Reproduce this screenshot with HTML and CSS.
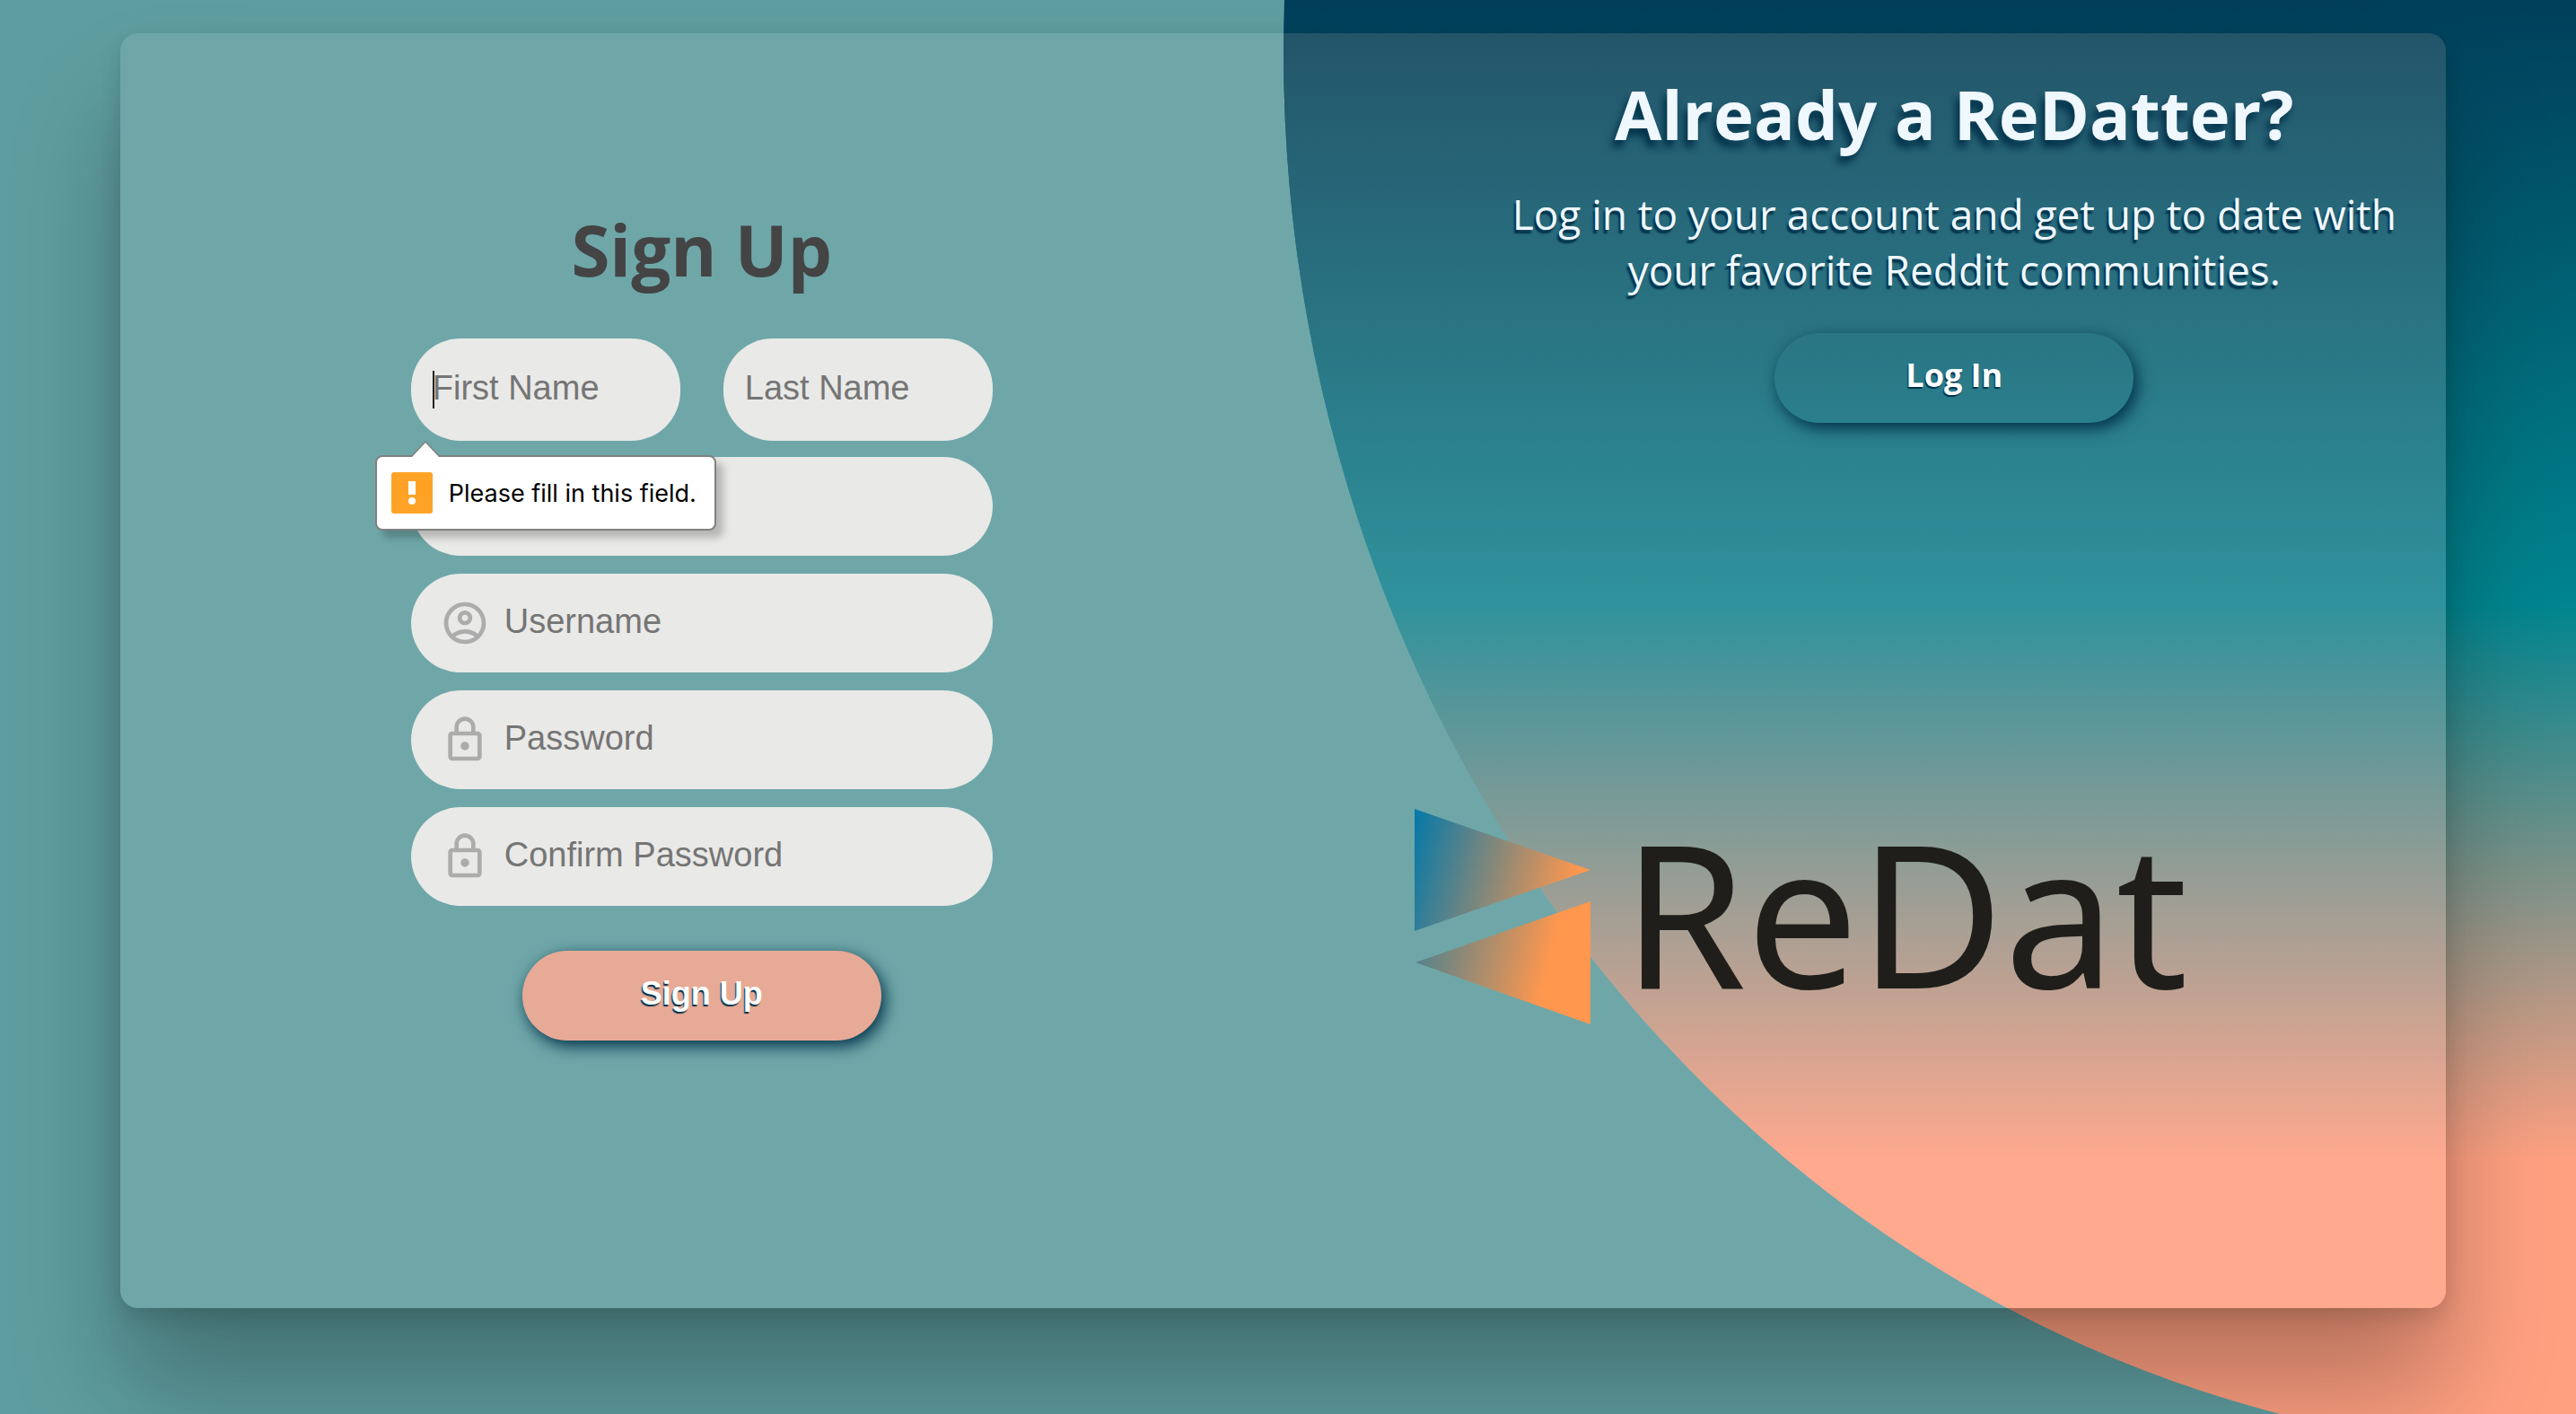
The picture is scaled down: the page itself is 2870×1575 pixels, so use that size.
FILE: index.html
```html
<!DOCTYPE html>
<html lang="en">
<head>
<meta charset="utf-8">
<title>ReDat</title>
<link rel="stylesheet" href="styles.css">
</head>
<body>
<div class="page">
  <main class="card">
    <div class="glass" aria-hidden="true"></div>
    <section class="signup">
      <form class="form" id="signup">
        <h1 class="form-title">Sign Up</h1>
        <div class="names">
          <input class="field short" type="text" placeholder="First Name" aria-label="First Name" required>
          <input class="field short" type="text" placeholder="Last Name" aria-label="Last Name" required>
          <span class="caret" aria-hidden="true"></span>
          <div class="bubble" role="alert">
            <svg class="bubble-tip" viewBox="0 0 34 18" aria-hidden="true"><path d="M1 18 17 1 33 18" fill="#fff" stroke="#808080" stroke-width="1.5"/></svg>
            <svg class="bubble-icon" viewBox="0 0 46 46" aria-hidden="true"><rect width="46" height="46" rx="3" fill="#ffa327"/><path d="M19 10h8v15h-8z" fill="#fff"/><circle cx="23" cy="32" r="4" fill="#fff"/></svg>
            <span>Please fill in this field.</span>
          </div>
        </div>
        <input class="field" type="email" aria-label="Email">
        <label class="field with-icon">
          <svg class="icon" viewBox="0 0 24 24" aria-hidden="true"><path d="M12 2C6.480 2 2 6.480 2 12s4.480 10 10 10 10-4.480 10-10S17.520 2 12 2zM7.350 18.500C8.660 17.560 10.260 17 12 17s3.340.56 4.650 1.500C15.340 19.440 13.740 20 12 20s-3.340-.56-4.650-1.500zm10.790-1.380C16.450 15.800 14.320 15 12 15s-4.450.8-6.140 2.120C4.700 15.730 4 13.950 4 12c0-4.420 3.580-8 8-8s8 3.580 8 8c0 1.950-.7 3.730-1.860 5.120zM12 6c-1.930 0-3.500 1.570-3.500 3.500S10.070 13 12 13s3.500-1.570 3.500-3.500S13.930 6 12 6zm0 5c-.83 0-1.500-.67-1.500-1.500S11.170 8 12 8s1.500.67 1.500 1.500S12.830 11 12 11z"/></svg>
          <input type="text" placeholder="Username" aria-label="Username">
        </label>
        <label class="field with-icon">
          <svg class="icon" viewBox="0 0 24 24" aria-hidden="true"><path d="M18 8h-1V6c0-2.760-2.240-5-5-5S7 3.240 7 6v2H6c-1.100 0-2 .9-2 2v10c0 1.100.9 2 2 2h12c1.100 0 2-.9 2-2V10c0-1.100-.9-2-2-2zM9 6c0-1.660 1.340-3 3-3s3 1.340 3 3v2H9V6zm9 14H6V10h12v10zm-6-3c1.100 0 2-.9 2-2s-.9-2-2-2-2 .9-2 2 .9 2 2 2z"/></svg>
          <input type="password" placeholder="Password" aria-label="Password">
        </label>
        <label class="field with-icon">
          <svg class="icon" viewBox="0 0 24 24" aria-hidden="true"><path d="M18 8h-1V6c0-2.760-2.240-5-5-5S7 3.240 7 6v2H6c-1.100 0-2 .9-2 2v10c0 1.100.9 2 2 2h12c1.100 0 2-.9 2-2V10c0-1.100-.9-2-2-2zM9 6c0-1.660 1.340-3 3-3s3 1.340 3 3v2H9V6zm9 14H6V10h12v10zm-6-3c1.100 0 2-.9 2-2s-.9-2-2-2-2 .9-2 2 .9 2 2 2z"/></svg>
          <input type="password" placeholder="Confirm Password" aria-label="Confirm Password">
        </label>
        <button class="btn btn-signup" type="submit">Sign Up</button>
      </form>
    </section>
    <section class="login">
      <div class="intro">
        <h2 class="login-title">Already a ReDatter?</h2>
        <p class="login-text">Log in to your account and get up to date with your favorite Reddit communities.</p>
        <button class="btn btn-login" type="button">Log In</button>
      </div>
      <div class="brand">
        <svg class="brand-mark" viewBox="0 0 196 240" aria-hidden="true">
          <defs>
            <linearGradient id="mark" gradientUnits="userSpaceOnUse" x1="0" y1="20" x2="184" y2="66">
              <stop offset="0" stop-color="#0a79a6"/><stop offset="1" stop-color="#ff974e"/>
            </linearGradient>
            <linearGradient id="mark2" gradientUnits="userSpaceOnUse" x1="-55" y1="140" x2="146" y2="190">
              <stop offset="0" stop-color="#0a79a6"/><stop offset="1" stop-color="#ff974e"/>
            </linearGradient>
          </defs>
          <path d="M0 0 196 68 0 136z" fill="url(#mark)"/>
          <path d="M196 103V240L1 171z" fill="url(#mark2)"/>
        </svg>
        <span class="brand-name">ReDat</span>
      </div>
    </section>
  </main>
</div>
</body>
</html>
```
FILE: styles.css
```css
* { box-sizing: border-box; margin: 0; }

body { font-family: "Open Sans", "Noto Sans", sans-serif; background: #5f9ea0; }

.page {
  min-height: 100vh;
  padding: 37px 145px 118px 134px;
  display: flex;
  position: relative;
  overflow: hidden;
}

/* The big disc behind the card, and the tinted part of it seen through the card */
.page::before,
.glass::before {
  content: "";
  position: absolute;
  left: calc(50vw - 5px);
  top: -1503px;
  width: 2886px;
  height: 3120px;
  border-radius: 50%;
  background: linear-gradient(#003f5a 1503px, #00858f 2175px, #ffa081 2795px);
}
.glass {
  position: absolute;
  inset: 0;
  overflow: hidden;
  border-radius: 20px;
}
.glass::before {
  left: calc(50vw - 139px);
  top: -1540px;
  background: linear-gradient(#23556a 1540px, #2f929c 2175px, #ffa98e 2795px);
}

.card {
  flex: 1;
  position: relative;
  display: grid;
  grid-template-columns: 1fr 1fr;
  border-radius: 20px;
  background: rgba(255, 255, 255, .1);
  box-shadow: 0 90px 120px rgba(0, 0, 0, .28), 0 10px 24px rgba(0, 0, 0, .14);
}

.signup { position: relative; display: flex; justify-content: center; padding: 193px 0 0; }

.form { width: 648px; display: flex; flex-direction: column; align-items: center; }

.form-title { font-size: 78px; line-height: 96px; color: #444; margin-bottom: 51px; }

.names { align-self: stretch; display: flex; justify-content: space-between; margin-bottom: 18px; position: relative; }

.field {
  width: 100%;
  height: 110px;
  margin-bottom: 20px;
  border: 0;
  border-radius: 55px;
  background: #e9e9e7;
  font: 38px "Liberation Sans", Arial, sans-serif;
  color: #333;
}
.short { width: 300px; height: 114px; margin: 0; padding: 0 24px 4px; }
.with-icon { display: flex; align-items: center; gap: 16px; padding: 0 32px; }
.with-icon input { flex: 1; min-width: 0; border: 0; background: none; font: inherit; padding: 0 0 4px; }
.icon { width: 56px; height: 56px; fill: #acacac; }
::placeholder { color: #757575; opacity: 1; }

.caret { position: absolute; left: 24px; top: 36px; width: 2px; height: 42px; background: #222; }

.bubble {
  position: absolute;
  left: -40px;
  top: 130px;
  height: 84px;
  padding: 0 20px 0 16px;
  display: flex;
  align-items: center;
  gap: 18px;
  border: 2px solid #808080;
  border-radius: 8px;
  background: #fff;
  box-shadow: 8px 8px 8px rgba(0, 0, 0, .22);
  font: 27px Inter, sans-serif;
  color: #000;
  white-space: nowrap;
}
.bubble-icon { width: 46px; height: 46px; }
.bubble-tip { position: absolute; left: 37px; top: -18px; width: 34px; height: 18px; }

.btn {
  width: 400px;
  height: 100px;
  border: 0;
  border-radius: 50px;
  padding: 0 0 4px;
  color: #fff;
  font-size: 36px;
  font-weight: 700;
  text-shadow: -1px 2px 1px #003049;
  box-shadow: 4px 6px 18px #003049;
}
.btn-signup { margin-top: 30px; background: #e7aa96; font-family: "Liberation Sans", Arial, sans-serif; }
.btn-login { padding-bottom: 8px; background: transparent; font-family: "Open Sans", "Noto Sans", sans-serif; }

.login { position: relative; padding: 42px 0 0 146px; }
.intro {
  display: flex;
  flex-direction: column;
  align-items: center;
  padding-left: 54px;
  color: #f0f8ff;
  text-align: center;
}
.login-title { font-size: 76px; line-height: 96px; text-shadow: -4px 8px 8px #003049; margin-bottom: 32px; }
.login-text { width: 1020px; font-size: 46px; line-height: 62px; text-shadow: -2px 4px 2px #003049; margin-bottom: 40px; }
.brand { display: flex; margin-top: 430px; gap: 36px; }
.brand-mark { width: 196px; height: 240px; }
.brand-name { font: 222px/228px "Noto Sans", sans-serif; color: #1f1e1a; }
```
